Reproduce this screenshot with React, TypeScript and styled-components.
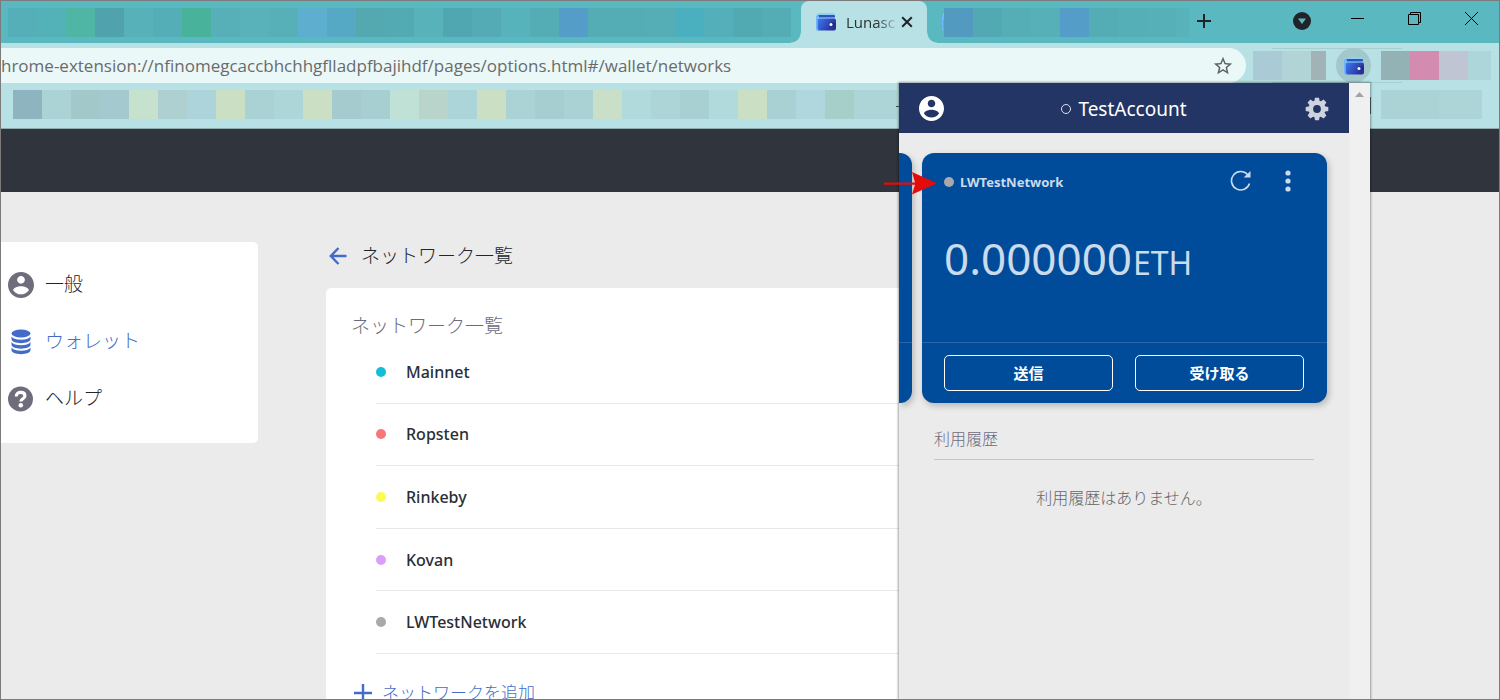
import React from 'react';
import styled, { createGlobalStyle, css } from 'styled-components';

const ui = `"Noto Sans", "Noto Sans CJK JP", sans-serif`;

const GlobalStyle = createGlobalStyle`
  * { box-sizing: border-box; }
  html, body, #root { height: 100%; }
  body { margin: 0; font-family: ${ui}; color: #2a2e36; background: #ebebeb; overflow: hidden; }
  button { font: inherit; color: inherit; background: none; border: 0; padding: 0; cursor: pointer; }
  h1, h2, p, ul { margin: 0; padding: 0; }
  a { color: inherit; text-decoration: none; }
  svg { display: block; flex: none; }
`;

/* ---------- window ---------- */

const Window = styled.div`
  position: relative;
  display: flex;
  flex-direction: column;
  height: 100%;
  overflow: hidden;
  border: 1px solid #7b7b7b;
`;

const TabStrip = styled.div`
  display: flex;
  flex: none;
  height: 42px;
  background: #5ab8c1;
`;

const Mosaic = styled.span`
  display: flex;
  flex: none;
  height: 29px;
`;

const Cell = styled.i<{ $color: string; $width?: number }>`
  flex: none;
  width: ${(p) => p.$width ?? 29}px;
  background: ${(p) => p.$color};
`;

const TabGroup = styled.div`
  display: flex;
  flex: none;
  padding: 7px 10px 0 7px;
`;

const ActiveTab = styled.div`
  position: relative;
  display: flex;
  flex: none;
  align-items: center;
  width: 126px;
  padding: 0 14px;
  border-radius: 8px 8px 0 0;
  background: #b7e1e4;
  &::before, &::after {
    content: '';
    position: absolute;
    bottom: 0;
    width: 10px;
    height: 10px;
  }
  &::before { right: 100%; background: radial-gradient(circle at 0 0, transparent 9px, #b7e1e4 10px); }
  &::after { left: 100%; background: radial-gradient(circle at 100% 0, transparent 9px, #b7e1e4 10px); }
`;

const TabTitle = styled.span`
  flex: 1;
  min-width: 0;
  margin-left: 9px;
  white-space: nowrap;
  font: 15px/20px "Open Sans", "Noto Sans", sans-serif;
  color: #2b2f30;
  mask-image: linear-gradient(90deg, #000 55%, transparent 98%);
`;

const NextTab = styled.div`
  display: flex;
  flex: none;
  padding: 7px 0 0 14px;
`;

const TabIcon = styled.span`
  display: block;
  width: 3px;
  height: 22px;
  padding-top: 4px;
  overflow: hidden;
`;

const StripButton = styled.button`
  display: grid;
  place-items: center;
  width: 30px;
  height: 40px;
`;

const Spacer = styled.span`
  flex: 1;
`;

const WindowButtons = styled.div`
  display: flex;
  flex: none;
  gap: 1px;
  height: 34px;
  padding-left: 12px;
`;

const WindowButton = styled.button`
  display: grid;
  place-items: center;
  width: 56px;
  height: 35px;
`;

const Toolbar = styled.div`
  display: flex;
  flex: none;
  align-items: center;
  height: 40px;
  padding: 5px 8px 0 0;
  background: #b7e1e4;
`;

const Omnibox = styled.form`
  display: flex;
  flex: 1;
  align-items: center;
  min-width: 0;
  height: 35px;
  padding-right: 12px;
  border-radius: 0 18px 18px 0;
  background: #ebf8f8;
`;

const Address = styled.input`
  flex: 1;
  min-width: 0;
  height: 35px;
  padding: 0;
  border: 0;
  outline: 0;
  background: none;
  font: 17px/24px "Open Sans", "Noto Sans", sans-serif;
  color: #696b6c;
`;

const Extensions = styled.div`
  display: flex;
  flex: none;
  align-items: center;
  gap: 10px;
  padding-left: 7px;
  background: linear-gradient(#a6cfd2, #a6cfd2) 26px 0 / 130px 1px no-repeat,
    linear-gradient(#a6cfd2, #a6cfd2) 26px 100% / 130px 1px no-repeat;
`;

const ExtensionButton = styled.button`
  display: grid;
  place-items: center;
  width: 35px;
  height: 35px;
  border-radius: 50%;
  background: #a3c8cc;
`;

const Bookmarks = styled.div`
  display: flex;
  flex: none;
  justify-content: space-between;
  height: 46px;
  padding: 7px 17px 0 12px;
  border-bottom: 1px solid #8fa9ac;
  background: #b7e1e4;
`;

/* ---------- options page ---------- */

const PageHeader = styled.header`
  flex: none;
  height: 63px;
  background: #30343d;
`;

const Page = styled.div`
  display: flex;
  flex: 1;
  align-items: flex-start;
  gap: 68px;
  min-height: 0;
  padding: 50px 180px 0 0;
  background: #ebebeb;
`;

const Sidebar = styled.nav`
  display: flex;
  flex: none;
  flex-direction: column;
  gap: 28px;
  width: 257px;
  padding: 28px 7px 30px;
  border-radius: 0 5px 5px 0;
  background: #fff;
`;

const SideLink = styled.a<{ $active?: boolean }>`
  display: flex;
  align-items: center;
  gap: 11px;
  height: 29px;
  font-size: 19px;
  font-weight: 300;
  line-height: 28px;
  color: ${(p) => (p.$active ? '#436cc9' : '#22252b')};
`;

const SideIcon = styled.span`
  color: #6f6d7c;
`;

const SideLabel = styled.span`
  padding-bottom: 2px;
`;

const Main = styled.main`
  flex: 1;
  min-width: 0;
`;

const TitleRow = styled.div`
  display: flex;
  align-items: center;
  gap: 14px;
  height: 27px;
  padding-left: 3px;
`;

const Title = styled.h1`
  font-size: 19px;
  font-weight: 300;
  line-height: 26px;
  color: #22252b;
`;

const Panel = styled.section`
  margin-top: 19px;
  padding: 24px 25px 40px;
  border-radius: 5px;
  background: #fff;
`;

const PanelTitle = styled.h2`
  font-size: 19px;
  font-weight: 300;
  line-height: 28px;
  color: #6d6b7b;
`;

const NetworkList = styled.ul`
  display: grid;
  grid-auto-rows: 1fr;
  height: 313px;
  margin: 1px 0 0 25px;
  list-style: none;
`;

const Network = styled.li`
  display: flex;
  align-items: center;
  gap: 20px;
  border-bottom: 1px solid #e8e8e8;
  font-size: 16px;
  font-weight: 500;
  line-height: 24px;
`;

const Dot = styled.span<{ $color: string }>`
  flex: none;
  width: 10px;
  height: 10px;
  border-radius: 50%;
  background: ${(p) => p.$color};
`;

const AddNetwork = styled.button`
  display: flex;
  align-items: center;
  gap: 10px;
  margin-top: 27px;
  padding-left: 3px;
  font-size: 17px;
  font-weight: 300;
  line-height: 24px;
  color: #436cc9;
`;

/* ---------- wallet popup ---------- */

const Popup = styled.aside`
  position: absolute;
  top: 82px;
  right: 129px;
  bottom: 0;
  display: flex;
  width: 471px;
  background: #ebebeb;
  box-shadow: 0 0 2px 1px rgba(0, 0, 0, 0.35);
  &::before, &::after {
    content: '';
    position: absolute;
    background: #3c4649;
  }
  &::before { top: 23px; right: 100%; width: 3px; height: 1px; }
  &::after { top: 14px; left: 100%; width: 1px; height: 17px; }
`;

const PopupBody = styled.div`
  flex: 1;
  min-width: 0;
`;

const PopupHeader = styled.header`
  display: grid;
  grid-template-columns: 40px 1fr 40px;
  align-items: center;
  justify-items: center;
  height: 50px;
  padding: 1px 12px 0;
  background: #233564;
  color: #fff;
`;

const Account = styled.button`
  display: flex;
  align-items: center;
  gap: 7px;
  font-size: 19px;
  line-height: 26px;
`;

const Ring = styled.span`
  width: 10px;
  height: 10px;
  border: 1px solid #dfe3ec;
  border-radius: 50%;
`;

const Carousel = styled.div`
  display: flex;
  gap: 10px;
  height: 280px;
  padding: 20px 0 10px;
  overflow: hidden;
`;

const cardSurface = css`
  display: flex;
  flex: none;
  flex-direction: column;
  justify-content: space-between;
  background: #004c9a;
  box-shadow: 2px 3px 6px rgba(0, 0, 0, 0.22);
`;

const PreviousCard = styled.div`
  ${cardSurface}
  justify-content: flex-end;
  width: 13px;
  border-radius: 0 12px 12px 0;
`;

const CardRule = styled.span`
  height: 61px;
  border-top: 1px solid #2665a8;
`;

const Card = styled.article`
  ${cardSurface}
  width: 405px;
  border-radius: 12px;
  color: #ccdbeb;
`;

const CardHead = styled.div`
  display: flex;
  align-items: center;
  height: 58px;
  padding: 0 34px 0 22px;
`;

const CardName = styled.span`
  flex: 1;
  margin-left: 6px;
  font-size: 13px;
  font-weight: 700;
  line-height: 18px;
`;

const IconButton = styled.button`
  display: grid;
  place-items: center;
  height: 28px;
  margin-left: 31px;
  padding-bottom: 2px;
`;

const Balance = styled.p`
  display: flex;
  flex: 1;
  align-items: baseline;
  gap: 1px;
  padding: 17px 22px 0;
  font-size: 44px;
  line-height: 60px;
`;

const Unit = styled.span`
  font-size: 32px;
`;

const CardActions = styled.div`
  display: flex;
  gap: 22px;
  height: 61px;
  padding: 12px 23px 12px 22px;
  border-top: 1px solid #2665a8;
`;

const ActionButton = styled.button`
  flex: 1;
  height: 36px;
  border: 1px solid #fff;
  border-radius: 5px;
  font-size: 15px;
  font-weight: 700;
  line-height: 20px;
  color: #fff;
`;

const History = styled.section`
  padding: 0 35px;
  font-size: 16px;
  font-weight: 300;
  line-height: 24px;
`;

const HistoryTitle = styled.h2`
  height: 33px;
  margin-top: 14px;
  border-bottom: 1px solid #c6c6c6;
  font-size: 16px;
  font-weight: 300;
  color: #6d6b7b;
`;

const HistoryEmpty = styled.p`
  margin-top: 26px;
  text-align: center;
  color: #666;
`;

const Scrollbar = styled.div`
  display: flex;
  flex: none;
  justify-content: center;
  width: 21px;
  padding-top: 9px;
  background: #f0f0f0;
`;

const Pointer = styled.svg`
  position: absolute;
  top: 171px;
  right: 561px;
`;

/* ---------- drawings ---------- */

const Wallet = ({ id }: { id: string }) => (
  <svg width="22" height="20" viewBox="0 0 22 20" aria-hidden="true">
    <defs>
      <linearGradient id={id} x1="0" x2="1" y1="0" y2="0.4">
        <stop offset="0" stopColor="#3f7cf2" />
        <stop offset="1" stopColor="#27309b" />
      </linearGradient>
    </defs>
    <rect x="2" y="1" width="18" height="9" rx="2" fill="#8fd0fa" />
    <rect x="3" y="3" width="17" height="3" rx="1" fill="#2c55b8" />
    <rect x="1" y="3" width="3" height="15" rx="1.5" fill="#6fb2fa" />
    <path d="M2 5.500h18v2H2z" fill="#9ad8fb" />
    <rect x="2" y="6.500" width="19" height="12" rx="2" fill={`url(#${id})`} />
    <path d="M2 5v11.500a2 2 0 0 0 2 2" fill="none" stroke="#74b6fb" strokeWidth="1.500" />
    <path d="M15.500 10.500H21v4h-5.500z" fill="#252a88" />
    <circle cx="16" cy="12.500" r="1.500" fill="#fff" />
  </svg>
);

const AccountIcon = ({ size }: { size: number }) => (
  <svg width={size} height={size} viewBox="2 2 20 20" fill="currentColor" aria-hidden="true">
    <path d="M12 2C6.480 2 2 6.480 2 12s4.480 10 10 10 10-4.480 10-10S17.520 2 12 2zm0 3c1.660 0 3 1.340 3 3s-1.340 3-3 3-3-1.340-3-3 1.340-3 3-3zm0 14.200c-2.500 0-4.710-1.280-6-3.220.03-1.990 4-3.080 6-3.080 1.990 0 5.970 1.090 6 3.080-1.290 1.940-3.500 3.220-6 3.220z" />
  </svg>
);

const HelpIcon = () => (
  <svg width="26" height="26" viewBox="0 0 26 26" aria-hidden="true">
    <circle cx="12.500" cy="13" r="12.500" fill="#6f6d7c" />
    <path d="M8.300 10.400c0-2.500 1.900-4 4.400-4s4.200 1.400 4.200 3.500c0 2.900-4 2.900-4 5.700" fill="none" stroke="#fff" strokeWidth="3.200" />
    <circle cx="12.800" cy="19.300" r="2.300" fill="#fff" />
  </svg>
);

const CoinsIcon = () => (
  <svg width="26" height="26" viewBox="0 0 26 26" fill="#436cc9" aria-hidden="true">
    <ellipse cx="13" cy="4.500" rx="9.500" ry="4" />
    {[7.500, 13, 18.500].map((y) => (
      <path key={y} d={`M3.500 ${y}c1.500 2.200 5 3.200 9.500 3.200s8-1 9.500-3.200v2.600c0 2.500-4.200 4.100-9.500 4.100s-9.500-1.600-9.500-4.100z`} />
    ))}
  </svg>
);

const GearIcon = () => (
  <svg width="24" height="24" viewBox="-12 -12 24 24" aria-hidden="true">
    <g fill="#ced3df">
      {[0, 45, 90, 135].map((a) => (
        <path key={a} d="M-2-11.300h4l.8 4v14.600l-.8 4h-4l-.8-4V-7.300z" transform={`rotate(${a})`} />
      ))}
      <circle r="8.400" />
    </g>
    <circle r="3.900" fill="#233564" />
  </svg>
);

/* ---------- data ---------- */

const leftTabs = [
  '#55afb8', '#52b2b7', '#4fb5a5', '#50a3ad', '#56b1b9', '#54aeb7', '#48b29b', '#57b0b8', '#59b2ba',
  '#57afb7', '#5eaecf', '#55a9c4', '#54a9b1', '#54aab2', '#57b2ba', '#51a7b1', '#54abb5', '#57b3bb',
  '#54adb5', '#549dc8', '#54adb5', '#54adb5', '#55aeb6', '#4aafbf', '#53afba', '#51a9b1', '#54acb4',
];
const rightTabs = ['#529ac0', '#52a9b3', '#55adb6', '#56b0b8', '#549dc8', '#54acb5', '#55afb7', '#56b0b8'];
const bookmarks = [
  '#8eb4bf', '#abd3d6', '#a2c8ca', '#a4cacf', '#c7e1cf', '#afd0d0', '#add4da', '#cbdfc5', '#aad2d5',
  '#add6d9', '#cbdfc5', '#a5cbce', '#a7ced1', '#c0e1d5', '#b9d5cb', '#acd5d9', '#cbdfc4', '#abd3d6',
  '#a6cdd0', '#aad2d5', '#c9dfc7', '#b0dadb', '#add5d7', '#a8d0d2', '#b0dadb', '#cbdfc5', '#a9d0d3',
  '#afd7dd', '#a5cfc8', '#add5d7',
];
const networks = [
  { name: 'Mainnet', color: '#14bfd6' },
  { name: 'Ropsten', color: '#f97676' },
  { name: 'Rinkeby', color: '#fdfa55' },
  { name: 'Kovan', color: '#dc9efc' },
  { name: 'LWTestNetwork', color: '#a9a9a9' },
];

const Cells = ({ colors, last }: { colors: string[]; last?: number }) => (
  <Mosaic aria-hidden="true">
    {colors.map((c, i) => (
      <Cell key={i} $color={c} $width={i === colors.length - 1 ? last : undefined} />
    ))}
  </Mosaic>
);

export default function App() {
  return (
    <>
      <GlobalStyle />
      <Window>
        <TabStrip>
          <TabGroup>
            <Cells colors={leftTabs} />
          </TabGroup>
          <ActiveTab>
            <Wallet id="wallet-tab" />
            <TabTitle>Lunasc</TabTitle>
            <button aria-label="Close tab">
              <svg width="12" height="12" viewBox="0 0 12 12" stroke="#202428" strokeWidth="2">
                <path d="M1.200 1.200l9.600 9.600M10.800 1.200l-9.600 9.600" />
              </svg>
            </button>
          </ActiveTab>
          <NextTab>
            <TabIcon><Wallet id="wallet-next" /></TabIcon>
            <Cells colors={[...rightTabs, '#57b2ba']} last={13} />
          </NextTab>
          <StripButton aria-label="New tab">
            <svg width="16" height="16" viewBox="0 0 16 16" stroke="#202428" strokeWidth="2">
              <path d="M8 1v14M1 8h14" />
            </svg>
          </StripButton>
          <Spacer />
          <StripButton aria-label="Search tabs">
            <svg width="18" height="18" viewBox="0 0 18 18">
              <circle cx="9" cy="9" r="9" fill="#202428" />
              <path d="M5 6.500h8L9 12z" fill="#5ab8c1" />
            </svg>
          </StripButton>
          <WindowButtons>
            <WindowButton aria-label="Minimize">
              <svg width="13" height="13" viewBox="0 0 13 13"><path d="M0 6.500h13" stroke="#000" /></svg>
            </WindowButton>
            <WindowButton aria-label="Restore">
              <svg width="13" height="13" viewBox="0 0 13 13" fill="none" stroke="#000">
                <path d="M.5 2.500h10v10H.5zM2.500 2.500v-2h10v10h-2" />
              </svg>
            </WindowButton>
            <WindowButton aria-label="Close window">
              <svg width="13" height="13" viewBox="0 0 13 13" stroke="#000"><path d="M0 0l13 13M13 0L0 13" /></svg>
            </WindowButton>
          </WindowButtons>
        </TabStrip>

        <Toolbar>
          <Omnibox>
            <Address
              aria-label="Address"
              defaultValue="hrome-extension://nfinomegcaccbhchhgflladpfbajihdf/pages/options.html#/wallet/networks"
            />
            <button type="button" aria-label="Bookmark this page">
              <svg width="22" height="22" viewBox="0 0 24 24" fill="#5c6163">
                <path d="M22 9.240l-7.190-.62L12 2 9.190 8.630 2 9.240l5.460 4.730L5.820 21 12 17.270 18.180 21l-1.630-7.030L22 9.240zM12 15.400l-3.760 2.270 1-4.280-3.320-2.880 4.380-.38L12 6.100l1.710 4.040 4.380.38-3.320 2.880 1 4.280L12 15.400z" />
              </svg>
            </button>
          </Omnibox>
          <Extensions>
            <Cells colors={['#aacbd6', '#b1d4d6', '#a2b3b7']} last={15} />
            <ExtensionButton aria-label="Wallet extension"><Wallet id="wallet-ext" /></ExtensionButton>
            <Cells colors={['#93b2b6', '#d38bb0', '#bfc5d2', '#acd6d9']} last={23} />
          </Extensions>
        </Toolbar>

        <Bookmarks>
          <Cells colors={bookmarks} last={43} />
          <Cells colors={['#abd3d5', '#abd3d5', '#add5d7', '#add5d7']} last={14} />
        </Bookmarks>

        <PageHeader />
        <Page>
          <Sidebar>
            <SideLink href="#/general">
              <SideIcon><AccountIcon size={26} /></SideIcon>
              <SideLabel>一般</SideLabel>
            </SideLink>
            <SideLink href="#/wallet" $active>
              <CoinsIcon />
              <SideLabel>ウォレット</SideLabel>
            </SideLink>
            <SideLink href="#/help">
              <HelpIcon />
              <SideLabel>ヘルプ</SideLabel>
            </SideLink>
          </Sidebar>
          <Main>
            <TitleRow>
              <button aria-label="Back">
                <svg width="18" height="18" viewBox="0 0 18 18" fill="none" stroke="#436cc9" strokeWidth="2.400">
                  <path d="M17.500 9H2M9.500 1L1.800 9l7.700 8" />
                </svg>
              </button>
              <Title>ネットワーク一覧</Title>
            </TitleRow>
            <Panel>
              <PanelTitle>ネットワーク一覧</PanelTitle>
              <NetworkList>
                {networks.map((n) => (
                  <Network key={n.name}>
                    <Dot $color={n.color} />
                    {n.name}
                  </Network>
                ))}
              </NetworkList>
              <AddNetwork>
                <svg width="18" height="18" viewBox="0 0 18 18" stroke="#436cc9" strokeWidth="2.400">
                  <path d="M9 0v18M0 9h18" />
                </svg>
                ネットワークを追加
              </AddNetwork>
            </Panel>
          </Main>
        </Page>

        <Popup>
          <PopupBody>
            <PopupHeader>
              <button aria-label="Accounts"><AccountIcon size={25} /></button>
              <Account><Ring />TestAccount</Account>
              <button aria-label="Settings"><GearIcon /></button>
            </PopupHeader>
            <Carousel>
              <PreviousCard>
                <CardRule />
              </PreviousCard>
              <Card>
                <CardHead>
                  <Dot $color="#a9a9a9" />
                  <CardName>LWTestNetwork</CardName>
                  <IconButton aria-label="Refresh">
                    <svg width="22" height="22" viewBox="0 0 22 22" fill="none" stroke="currentColor" strokeWidth="1.600">
                      <path d="M19.500 13.500A9.200 9.200 0 1 1 17.500 4.500" />
                      <path d="M20.500 1v6.500h-6.800z" fill="currentColor" stroke="none" />
                    </svg>
                  </IconButton>
                  <IconButton aria-label="Menu">
                    <svg width="10" height="22" viewBox="0 0 10 22" fill="currentColor">
                      <circle cx="5" cy="3" r="2.600" />
                      <circle cx="5" cy="11" r="2.600" />
                      <circle cx="5" cy="19" r="2.600" />
                    </svg>
                  </IconButton>
                </CardHead>
                <Balance>0.000000<Unit>ETH</Unit></Balance>
                <CardActions>
                  <ActionButton>送信</ActionButton>
                  <ActionButton>受け取る</ActionButton>
                </CardActions>
              </Card>
            </Carousel>
            <History>
              <HistoryTitle>利用履歴</HistoryTitle>
              <HistoryEmpty>利用履歴はありません。</HistoryEmpty>
            </History>
          </PopupBody>
          <Scrollbar>
            <svg width="9" height="5" viewBox="0 0 9 5"><path d="M4.500 0L9 5H0z" fill="#a3a3a3" /></svg>
          </Scrollbar>
        </Popup>

        <Pointer width="54" height="24" viewBox="0 0 54 24" fill="#e40b0b" aria-hidden="true">
          <path d="M0 10.400h31L28 0l25 11.300L28 22.500l3-9.700H0z" />
        </Pointer>
      </Window>
    </>
  );
}
